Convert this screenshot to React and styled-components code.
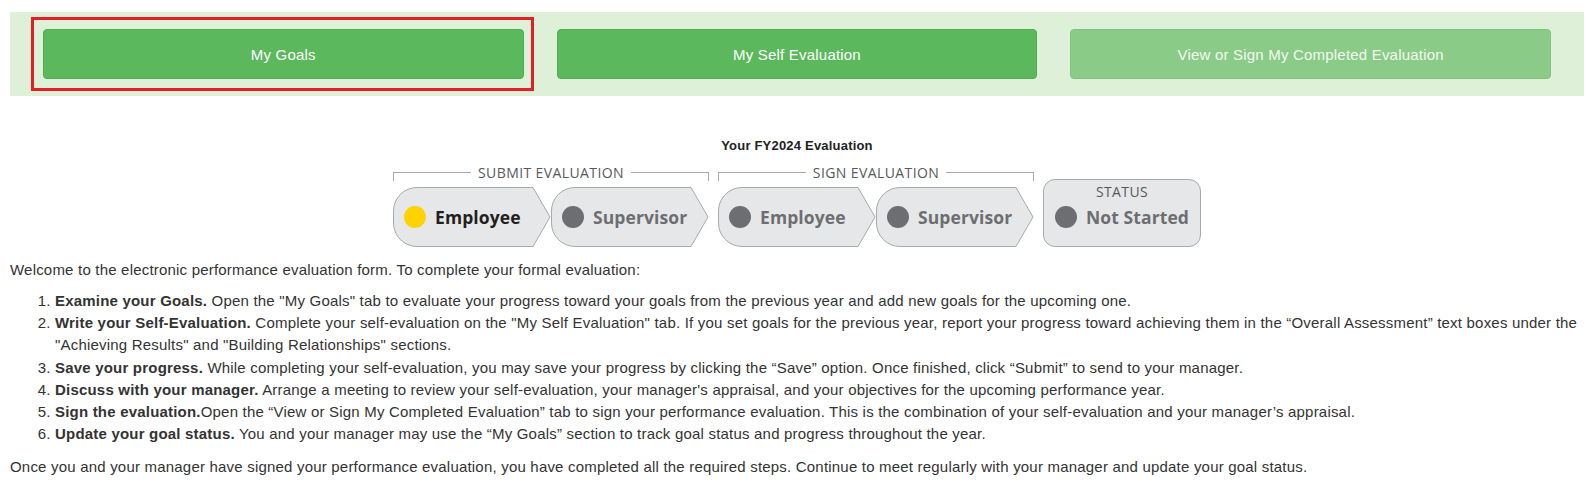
import React from 'react';
import styled, { createGlobalStyle } from 'styled-components';

const GlobalStyle = createGlobalStyle`
    body {
        margin: 0;
        background: #fff;
        font-family: 'Liberation Sans', Arial, sans-serif;
        font-size: 15px;
        color: #333;
    }
`;

const Page = styled.div`
    padding: 12px 10px 0 10px;
`;

const Banner = styled.div`
    background-color: #dff0d8;
    padding: 17px 33px 17px 33px;
    display: grid;
    grid-template-columns: repeat(3, 1fr);
    gap: 33px;
`;

const TabWrap = styled.div`
    position: relative;

    ${props => props.highlighted && `
        &::after {
            content: '';
            position: absolute;
            top: -12px;
            left: -12px;
            right: -10px;
            bottom: -12px;
            border: 3px solid #e31e26;
            pointer-events: none;
        }
    `}
`;

const TabButton = styled.button`
    width: 100%;
    height: 50px;
    background-color: #5cb85c;
    border: 1px solid #4cae4c;
    border-radius: 4px;
    color: #fff;
    font-family: 'Liberation Sans', Arial, sans-serif;
    font-size: 15px;
    letter-spacing: 0.2px;
    cursor: pointer;
    opacity: ${props => (props.disabled ? 0.65 : 1)};
`;

const Heading = styled.div`
    text-align: center;
    font-weight: bold;
    font-size: 13px;
    letter-spacing: 0.2px;
    color: #222;
    margin-top: 43px;
    line-height: 14px;
`;

const Stepper = styled.div`
    display: flex;
    justify-content: center;
    align-items: flex-end;
    gap: 9px;
    margin-top: 12px;
    font-family: 'Open Sans', sans-serif;
`;

const Group = styled.div`
    width: 316px;
`;

const GroupHeader = styled.div`
    display: flex;
    align-items: center;
    height: 16px;
    margin-bottom: 6px;
`;

const Rule = styled.div`
    flex: 1;
    height: 8px;
    align-self: flex-end;
    border-top: 1px solid #a7a9ac;
    ${props => props.side === 'left' && 'border-left: 1px solid #a7a9ac;'}
    ${props => props.side === 'right' && 'border-right: 1px solid #a7a9ac;'}
`;

const GroupLabel = styled.span`
    font-size: 14px;
    color: #58595b;
    padding: 0 7px;
    letter-spacing: 0.4px;
    line-height: 16px;
`;

const Steps = styled.div`
    display: flex;
`;

const Step = styled.div`
    position: relative;
    width: 158px;
    height: 60px;
    display: flex;
    align-items: center;
    padding-left: 11px;
    box-sizing: border-box;
`;

const StepShape = styled.svg`
    position: absolute;
    top: 0;
    left: 0;
    z-index: 0;
`;

const Dot = styled.span`
    position: relative;
    width: 22px;
    height: 22px;
    border-radius: 50%;
    background-color: ${props => (props.active ? '#ffd200' : '#6d6e71')};
    flex-shrink: 0;
`;

const StepLabel = styled.span`
    position: relative;
    margin-left: 9px;
    font-size: 17.5px;
    font-weight: 700;
    color: ${props => (props.active ? '#231f20' : '#6d6e71')};
    letter-spacing: 0.1px;
`;

const StatusBox = styled.div`
    width: 158px;
    height: 68px;
    box-sizing: border-box;
    background-color: #e6e7e8;
    border: 1px solid #a7a9ac;
    border-radius: 12px;
    display: flex;
    flex-direction: column;
    align-items: center;
    padding-top: 3px;
`;

const StatusTitle = styled.div`
    font-size: 14px;
    letter-spacing: 0.4px;
    color: #58595b;
    line-height: 18px;
`;

const StatusRow = styled.div`
    display: flex;
    align-items: center;
    margin-top: 4px;
`;

const TextBlock = styled.div`
    letter-spacing: 0.2px;
`;

const Intro = styled.p`
    margin: 12px 0 9px;
    line-height: 22px;
`;

const Steplist = styled.ol`
    margin: 0 0 11px;
    padding-left: 45px;
    line-height: 22.2px;
`;

const Outro = styled.p`
    margin: 0;
    line-height: 22px;
`;

const w = 158;
const h = 60;
const r = 24;
const shapePath = `M${r} 0.5 H${w - 18} L${w - 1} ${h / 2} L${w - 18} ${h - 0.5} H${r} A${r - 0.5} ${r - 0.5} 0 0 1 0.5 ${h - r} V${r} A${r - 0.5} ${r - 0.5} 0 0 1 ${r} 0.5 Z`;

const StepItem = ({ label, active }) => (
    <Step>
        <StepShape width={w} height={h} viewBox={`0 0 ${w} ${h}`}>
            <path d={shapePath} fill="#e6e7e8" stroke="#a7a9ac" strokeWidth="1" />
        </StepShape>
        <Dot active={active} />
        <StepLabel active={active}>{label}</StepLabel>
    </Step>
);

const StepGroup = ({ title, steps }) => (
    <Group>
        <GroupHeader>
            <Rule side="left" />
            <GroupLabel>{title}</GroupLabel>
            <Rule side="right" />
        </GroupHeader>
        <Steps>
            {steps.map(s => (
                <StepItem key={s.label} label={s.label} active={s.active} />
            ))}
        </Steps>
    </Group>
);

const App = () => {
    return (
        <>
            <GlobalStyle />
            <Page>
                <Banner>
                    <TabWrap highlighted>
                        <TabButton>My Goals</TabButton>
                    </TabWrap>
                    <TabWrap>
                        <TabButton>My Self Evaluation</TabButton>
                    </TabWrap>
                    <TabWrap>
                        <TabButton disabled>View or Sign My Completed Evaluation</TabButton>
                    </TabWrap>
                </Banner>

                <Heading>Your FY2024 Evaluation</Heading>
                <Stepper>
                    <StepGroup
                        title="SUBMIT EVALUATION"
                        steps={[{ label: 'Employee', active: true }, { label: 'Supervisor' }]}
                    />
                    <StepGroup
                        title="SIGN EVALUATION"
                        steps={[{ label: 'Employee' }, { label: 'Supervisor' }]}
                    />
                    <StatusBox>
                        <StatusTitle>STATUS</StatusTitle>
                        <StatusRow>
                            <Dot />
                            <StepLabel>Not Started</StepLabel>
                        </StatusRow>
                    </StatusBox>
                </Stepper>

                <TextBlock>
                    <Intro>Welcome to the electronic performance evaluation form. To complete your formal evaluation:</Intro>
                    <Steplist>
                        <li><b>Examine your Goals.</b> Open the "My Goals" tab to evaluate your progress toward your goals from the previous year and add new goals for the upcoming one.</li>
                        <li><b>Write your Self-Evaluation.</b> Complete your self-evaluation on the "My Self Evaluation" tab. If you set goals for the previous year, report your progress toward achieving them in the “Overall Assessment” text boxes under the "Achieving Results" and "Building Relationships" sections.</li>
                        <li><b>Save your progress.</b> While completing your self-evaluation, you may save your progress by clicking the “Save” option. Once finished, click “Submit” to send to your manager.</li>
                        <li><b>Discuss with your manager.</b> Arrange a meeting to review your self-evaluation, your manager's appraisal, and your objectives for the upcoming performance year.</li>
                        <li><b>Sign the evaluation.</b>Open the “View or Sign My Completed Evaluation” tab to sign your performance evaluation. This is the combination of your self-evaluation and your manager’s appraisal.</li>
                        <li><b>Update your goal status.</b> You and your manager may use the “My Goals” section to track goal status and progress throughout the year.</li>
                    </Steplist>
                    <Outro>Once you and your manager have signed your performance evaluation, you have completed all the required steps. Continue to meet regularly with your manager and update your goal status.</Outro>
                </TextBlock>
            </Page>
        </>
    );
};

export default App;
